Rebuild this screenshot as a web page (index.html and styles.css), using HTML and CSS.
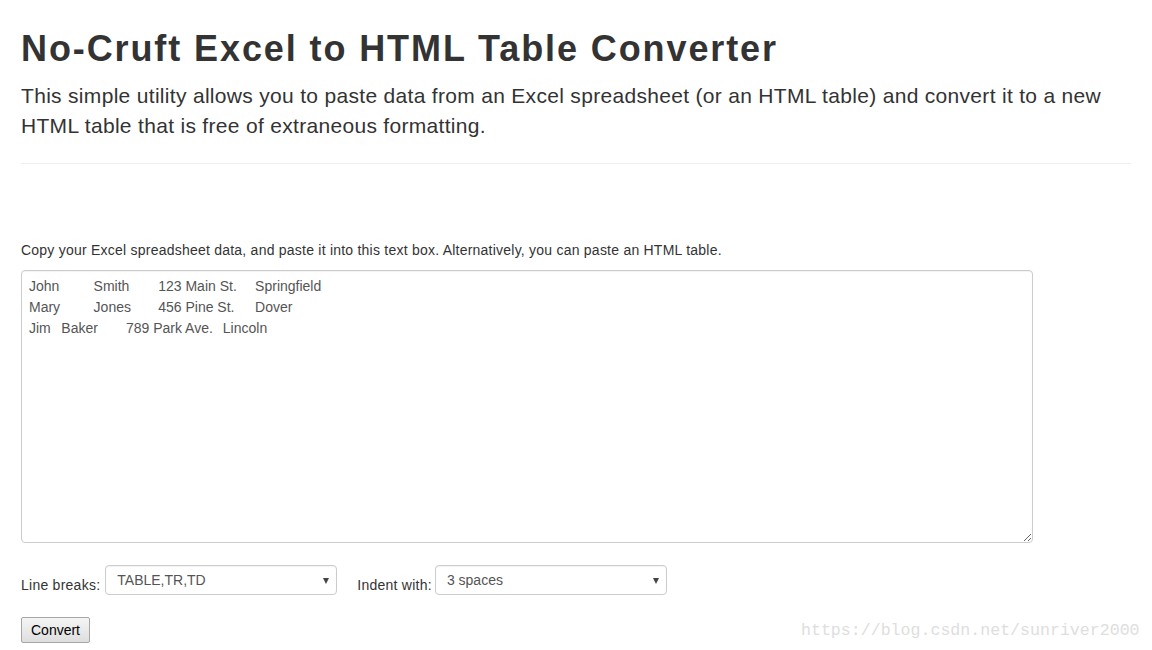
FILE: index.html
```html
<!DOCTYPE html>
<html lang="en">
<head>
<meta charset="utf-8">
<title>No-Cruft Excel to HTML Table Converter</title>
<link rel="stylesheet" href="styles.css">
</head>
<body>
<div class="container">
  <h1 class="title">No-Cruft Excel to HTML Table Converter</h1>
  <p class="lead">This simple utility allows you to paste data from an Excel spreadsheet (or an HTML table) and convert it to a new HTML table that is free of extraneous formatting.</p>
  <hr class="divider">
  <p class="hint">Copy your Excel spreadsheet data, and paste it into this text box. Alternatively, you can paste an HTML table.</p>
  <textarea class="data" spellcheck="false">John	Smith	123 Main St.	Springfield
Mary	Jones	456 Pine St.	Dover
Jim	Baker	789 Park Ave.	Lincoln</textarea>
  <div class="options">
    <label class="opt-label">Line breaks:</label>
    <span class="select-wrap"><select class="select"><option>TABLE,TR,TD</option></select></span>
    <label class="opt-label opt-label-2">Indent with:</label>
    <span class="select-wrap"><select class="select"><option>3 spaces</option></select></span>
  </div>
  <button class="convert" type="button">Convert</button>
</div>
<div class="watermark">https://blog.csdn.net/sunriver2000</div>
</body>
</html>
```
FILE: styles.css
```css
html, body {
  margin: 0;
  padding: 0;
  background: #fff;
}
body {
  font-family: "Liberation Sans", Arial, sans-serif;
  color: #333;
  font-size: 14px;
  line-height: 20px;
}
.container {
  width: 1110px;
  padding: 29px 0 0 21px;
}
.title {
  margin: 0 0 12px;
  font-size: 36px;
  line-height: 40px;
  font-weight: bold;
  letter-spacing: 1.9px;
  color: #333;
}
.lead {
  margin: 0;
  font-size: 21px;
  line-height: 30px;
  letter-spacing: 0.31px;
  color: #333;
}
.divider {
  margin: 22px 0 0;
  border: 0;
  border-top: 1px solid #eee;
  height: 0;
}
.hint {
  margin: 76px 0 10px;
  letter-spacing: 0.23px;
}
.data {
  display: block;
  box-sizing: border-box;
  width: 1012px;
  height: 273px;
  margin: 0;
  padding: 5px 7px;
  border: 1px solid #ccc;
  border-radius: 4px;
  font-family: "Liberation Sans", Arial, sans-serif;
  font-size: 14px;
  line-height: 21px;
  color: #555;
  tab-size: 32.3px;
  -moz-tab-size: 32.3px;
  outline: none;
  box-shadow: inset 0 1px 1px rgba(0,0,0,0.05);
}
.options {
  display: flex;
  align-items: flex-start;
  margin-top: 22px;
}
.opt-label {
  margin-top: 10px;
  margin-right: 5px;
  letter-spacing: 0.25px;
}
.opt-label-2 {
  margin-left: 20px;
  margin-right: 3px;
}
.select-wrap {
  position: relative;
  display: block;
}
.select-wrap::after {
  content: "";
  position: absolute;
  right: 8px;
  top: 13px;
  border-left: 3.5px solid transparent;
  border-right: 3.5px solid transparent;
  border-top: 6px solid #444;
  pointer-events: none;
}
.select {
  display: block;
  box-sizing: border-box;
  width: 232px;
  height: 30px;
  margin: 0;
  padding: 0 11px;
  border: 1px solid #ccc;
  border-radius: 4px;
  background: #fff;
  font-family: "Liberation Sans", Arial, sans-serif;
  font-size: 14px;
  color: #555;
  -webkit-appearance: none;
  appearance: none;
  outline: none;
  box-shadow: inset 0 1px 1px rgba(0,0,0,0.05);
}
.convert {
  display: block;
  box-sizing: border-box;
  margin-top: 22px;
  width: 69px;
  height: 26px;
  padding: 0;
  border: 1px solid #a6a6a6;
  border-radius: 2px;
  background: linear-gradient(#f5f5f5, #dedede);
  font-family: "Liberation Sans", Arial, sans-serif;
  font-size: 14px;
  color: #000;
}
.watermark {
  position: absolute;
  left: 801px;
  top: 621px;
  font-family: "Liberation Mono", "DejaVu Sans Mono", monospace;
  font-size: 16.6px;
  line-height: 20px;
  color: #dedede;
  white-space: nowrap;
}
```
